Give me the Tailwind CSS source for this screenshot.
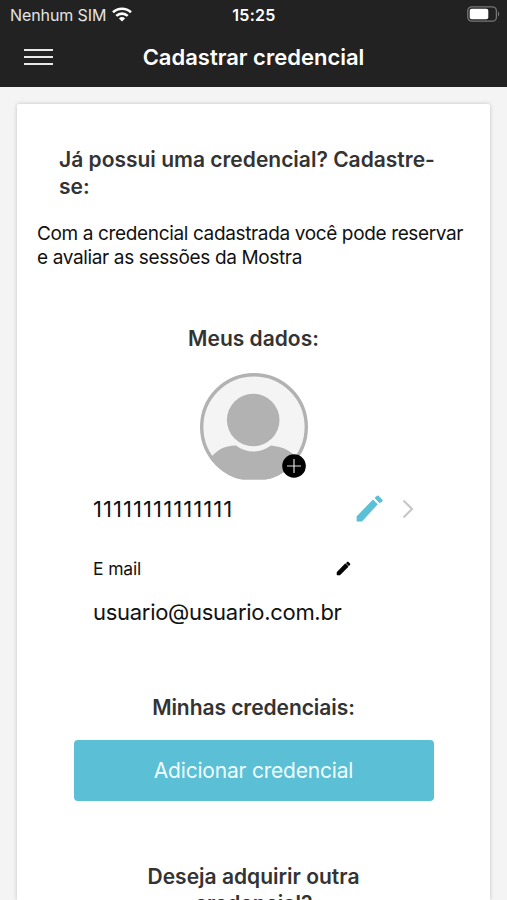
<!DOCTYPE html>
<html lang="pt-BR">
<head>
    <meta charset="UTF-8">
    <meta name="viewport" content="width=device-width, initial-scale=1.0">
    <title>Cadastrar credencial</title>
    <script src="https://cdn.jsdelivr.net/npm/@tailwindcss/browser@4"></script>
</head>
<body class="h-[900px] overflow-hidden bg-[#f4f4f4] font-['Inter','Liberation_Sans',sans-serif] text-[#111]">

    <header class="h-[87px] bg-[#222] text-white">
        <!-- Barra de status -->
        <div class="grid h-[29px] grid-cols-3 items-center pr-[7px] pl-[10px]">
            <div class="flex items-center gap-[6px]">
                <span class="text-[16px] tracking-[-0.1px] whitespace-nowrap text-[#e4e4e4]">Nenhum SIM</span>
                <svg class="h-[15px] w-5 shrink-0" viewBox="0 0 20 15" fill="none" stroke="#fff" stroke-width="2.6">
                    <path d="M1 5.3a13 13 0 0 1 18 0"/>
                    <path d="M4.3 8.9a8.3 8.3 0 0 1 11.4 0"/>
                    <path d="M10 14.6l-3.1-3.2a4.5 4.5 0 0 1 6.2 0z" fill="#fff" stroke="none"/>
                </svg>
            </div>
            <span class="-ml-[2px] text-center text-[16px] font-semibold tracking-[0.3px]">15:25</span>
            <svg class="-mt-px h-4 w-[33px] justify-self-end" viewBox="0 0 33 16">
                <rect x="0.8" y="0.8" width="28.6" height="14.4" rx="4" fill="none" stroke="#777" stroke-width="1.3"/>
                <rect x="2.7" y="2.8" width="18.6" height="10.4" rx="2" fill="#fff"/>
                <path d="M31 5.5c1.6.8 1.6 4.2 0 5z" fill="#777"/>
            </svg>
        </div>
        <!-- Título -->
        <div class="grid h-[56px] grid-cols-[60px_1fr_60px] items-center">
            <button class="ml-6 flex w-[29px] flex-col gap-[5px]" aria-label="Menu">
                <span class="h-[2px] w-full bg-[#e8e8e8]"></span>
                <span class="h-[2px] w-full bg-[#e8e8e8]"></span>
                <span class="h-[2px] w-full bg-[#e8e8e8]"></span>
            </button>
            <h1 class="text-center text-[22px] font-semibold">Cadastrar credencial</h1>
        </div>
    </header>

    <main class="mx-[17px] mt-[17px] h-[796px] overflow-y-clip rounded-t-[2px] bg-white pt-[42px] shadow-[0_0_4px_rgba(0,0,0,0.2)]">
        <h2 class="pr-10 pl-[42px] text-[21px] leading-[27px] font-semibold text-[#333]">Já possui uma credencial? Cadastre-<br>se:</h2>
        <p class="mt-[21.5px] pl-5 text-[19px] leading-[24.5px] tracking-[-0.36px] whitespace-nowrap">Com a credencial cadastrada você pode reservar<br>e avaliar as sessões da Mostra</p>

        <h2 class="mt-[54.5px] text-center text-[21px] leading-[27px] font-semibold text-[#333]">Meus dados:</h2>

        <!-- Foto do perfil -->
        <div class="relative mx-auto mt-[21px] h-[108px] w-[108px]">
            <svg class="h-[108px] w-[108px]" viewBox="0 0 108 108">
                <defs>
                    <clipPath id="avatar"><path d="M0 0H108V106.5H0z"/></clipPath>
                    <clipPath id="circle"><circle cx="54" cy="54" r="54"/></clipPath>
                </defs>
                <g clip-path="url(#avatar)">
                    <circle cx="54" cy="54" r="52.3" fill="#f4f4f4" stroke="#b2b2b2" stroke-width="3.4"/>
                    <circle cx="53.2" cy="47" r="26.3" fill="#b2b2b2"/>
                    <path d="M10 86C16 77 24 73 36 72.5C47 80.5 60 80.5 71 72.5C83 74 91 77 97 86V108H10z" fill="#b2b2b2" clip-path="url(#circle)"/>
                </g>
            </svg>
            <svg class="absolute top-[81px] left-[82px] h-6 w-6" viewBox="0 0 24 24">
                <circle cx="12" cy="12" r="11.8"/>
                <path d="M12 5v14M5 12h14" stroke="#ddd" stroke-width="1.2"/>
            </svg>
        </div>

        <div class="mt-[14px] flex h-7 items-center pl-[76px]">
            <span class="w-[262px] text-[22px] tracking-[1.07px]">11111111111111</span>
            <svg class="h-7 w-7" viewBox="0 0 28 28" fill="#5bbfd6">
                <path d="M1.6 21.4L18 4.4L22.8 9.2L7 26.4H1.6z"/>
                <path d="M19.6 3L21.6 1Q22.7 0 23.8 1L27.2 4.4Q28.2 5.5 27.2 6.6L24.6 8.3z"/>
            </svg>
            <svg class="ml-[19px] h-5 w-3" viewBox="0 0 12 20" fill="none" stroke="#c7c7cc" stroke-width="2.2">
                <path d="M1.5 1.5L10 10L1.5 18.5"/>
            </svg>
        </div>

        <div class="mt-[34px] flex h-6 items-center pl-[76px]">
            <span class="w-[243px] text-[17.5px] tracking-[-0.15px]">E mail</span>
            <svg class="-mt-px h-[15px] w-[15px]" viewBox="0 0 28 28" stroke="#000" stroke-linejoin="round">
                <path d="M2.6 21.4L17.5 6L21.8 10.3L7 25.4H2.6z" stroke-width="2.5"/>
                <path d="M20 4L22 2.2L25.8 6L24 8z" stroke-width="2"/>
            </svg>
        </div>
        <p class="mt-[17px] pl-[76px] text-[22px] leading-7 tracking-[-0.29px]">usuario@usuario.com.br</p>

        <h2 class="mt-[68px] text-center text-[21px] leading-[27px] font-semibold tracking-[-0.06px] text-[#333]">Minhas credenciais:</h2>
        <button class="mx-auto mt-[19px] block h-[61px] w-[360px] rounded-[4px] bg-[#5bbfd6] pt-px text-[21px] tracking-[-0.2px] text-[#effdff]">Adicionar credencial</button>

        <h2 class="mt-[62px] text-center text-[21px] leading-[27px] font-semibold text-[#333]">Deseja adquirir outra<br>credencial?</h2>
    </main>

</body>
</html>
